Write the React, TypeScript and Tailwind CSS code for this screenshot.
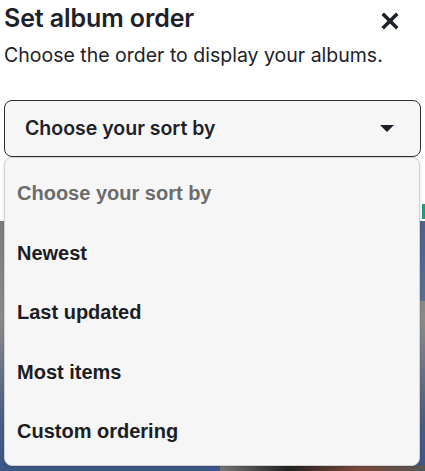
import { useState } from "react";

const options = ["Newest", "Last updated", "Most items", "Custom ordering"];

export default function App() {
  const [open] = useState(true);

  return (
    <div className="relative flex h-[471px] w-[425px] flex-col overflow-hidden bg-white">
      {/* Modal content */}
      <div className="h-[221px] shrink-0 bg-white px-[4px] font-['Inter',sans-serif] text-[#1d2129]">
        <div className="flex items-start justify-between pt-[2px]">
          <h1 className="text-[25px] font-semibold leading-[32px] tracking-[-0.1px]">Set album order</h1>
          <button className="mr-[22px] mt-[10px] text-[#1d2129]">
            <svg width="18" height="18" viewBox="0 0 18 18">
              <path d="M3 3 L15 15 M15 3 L3 15" stroke="currentColor" strokeWidth="3.6" strokeLinecap="square" />
            </svg>
          </button>
        </div>
        <p className="mt-[8px] text-[19.5px] leading-[26px]">Choose the order to display your albums.</p>

        {/* Select */}
        <div className="mt-[32px] flex h-[57px] items-center justify-between rounded-[8px] border border-[#2a2e36] bg-[#f6f6f6] pl-[20px] pr-[26px]">
          <span className="text-[19.5px] font-semibold">Choose your sort by</span>
          <svg width="14" height="8" viewBox="0 0 14 8">
            <path d="M0 0 L14 0 L7 7 Z" fill="#1d2129" />
          </svg>
        </div>
      </div>

      {/* Page behind the modal */}
      <div className="relative flex-1 bg-[linear-gradient(180deg,#7d7d7d_0%,#8a8a8a_40%,#4a5d82_80%,#3c5787_100%)]">
        <div className="absolute right-0 top-0 h-[80px] w-[6px] bg-[linear-gradient(180deg,#4b628b,#5a6f95)]" />
        <div className="absolute bottom-0 left-[220px] h-[6px] w-[205px] bg-[linear-gradient(90deg,#777,#222,#7a4a3a,#555)]" />
      </div>
      <div className="absolute right-0 top-[204px] h-[15px] w-[3px] bg-[#1f9a80]" />

      {/* Dropdown menu */}
      {open && (
        <div className="absolute left-[4px] top-[157px] h-[309px] w-[416px] rounded-[8px] border border-[#d2d2d2] bg-[#f6f6f6] pt-[5px] font-['Liberation_Sans',Arial,sans-serif] shadow-[0_1px_3px_rgba(0,0,0,0.15)]">
          <div className="flex h-[60px] items-center pl-[12px] text-[20px] font-bold text-[#6c6c6c]">Choose your sort by</div>
          {options.map((o) => (
            <div key={o} className="flex h-[59.5px] items-center pl-[12px] text-[20px] font-bold text-[#1b1d24]">
              {o}
            </div>
          ))}
        </div>
      )}
    </div>
  );
}
